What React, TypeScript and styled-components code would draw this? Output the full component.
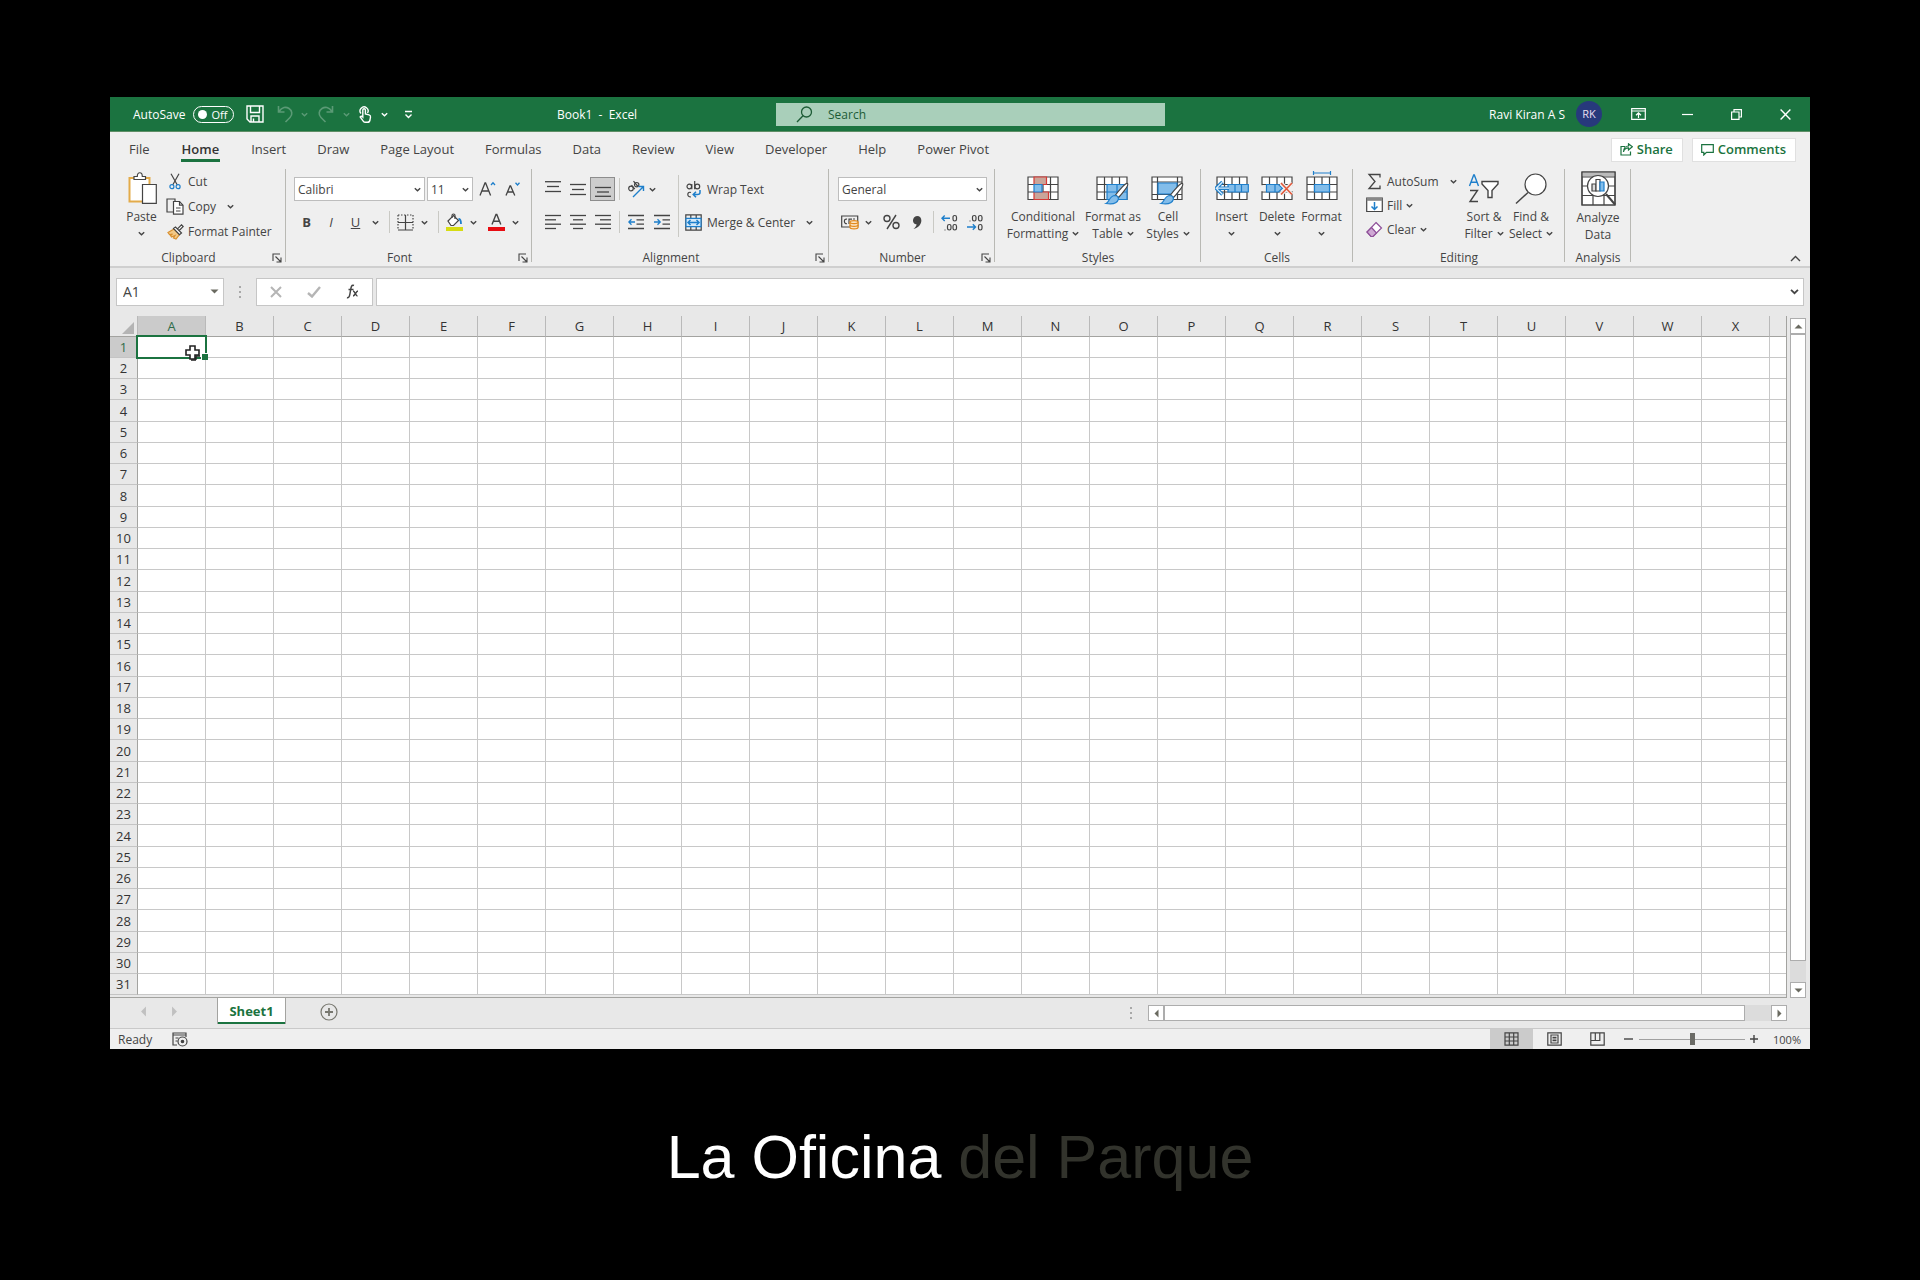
import React from 'react';
import styled, { createGlobalStyle, css } from 'styled-components';

const GREEN = '#1b7340';
const INK = '#444444';
const BLUE = '#1e7fcb';
const SKY = '#83bdea';
const LINE = '#c8c8c8';

const GlobalStyle = createGlobalStyle`
  * { box-sizing: border-box; }
  body { margin: 0; background: #000; }
  button, input, select { font: inherit; color: inherit; margin: 0; padding: 0; border: 0; background: none; }
  svg { display: block; flex: none; }
`;

const Page = styled.div`
  min-height: 100vh;
  padding: 97px 110px 0;
  background: #000;
  font-family: 'Open Sans', 'Noto Sans', sans-serif;
  font-size: 12px;
  line-height: 17px;
  color: ${INK};
`;

const Window = styled.main`
  display: flex;
  flex-direction: column;
  background: #efefef;
`;

/* ---------- Title bar ---------- */

const TitleBar = styled.header`
  display: grid;
  grid-template-columns: 447fr 219fr 389fr 645fr;
  align-items: center;
  height: 35px;
  background: ${GREEN};
  border-bottom: 1px solid #5f8f66;
  color: #fff;
`;

const QuickAccess = styled.div`
  display: flex;
  align-items: center;
  padding-left: 23px;
`;

const AutoSave = styled.label`
  display: flex;
  align-items: center;
  gap: 8px;
  margin-right: 5px;
`;

const Toggle = styled.span`
  display: flex;
  align-items: center;
  justify-content: space-between;
  width: 41px;
  height: 17px;
  padding: 0 6px 0 4px;
  border: 1px solid #fff;
  border-radius: 9px;
  font-size: 11px;
`;

const Knob = styled.input`
  appearance: none;
  width: 9px;
  height: 9px;
  border-radius: 50%;
  background: #fff !important;
`;

const IconButton = styled.button<{ $w: number; $dim?: boolean }>`
  display: flex;
  align-items: center;
  justify-content: center;
  width: ${p => p.$w}px;
  height: 24px;
  flex: none;
  opacity: ${p => (p.$dim ? 0.28 : 1)};
`;

const DocTitle = styled.h1`
  margin: 0;
  font-size: 12px;
  font-weight: 400;
  white-space: pre;
`;

const SearchBox = styled.div`
  display: flex;
  align-items: center;
  gap: 15px;
  height: 23px;
  padding-left: 20px;
  background: #a9cfba;
  color: #1d5c36;

  input { flex: 1; min-width: 0; height: 23px; outline: none; }
  input::placeholder { color: #1d5c36; opacity: 1; }
`;

const Account = styled.div`
  display: flex;
  align-items: center;
  justify-content: flex-end;
`;

const Avatar = styled.span`
  width: 26px;
  height: 26px;
  margin: 0 11px;
  border-radius: 50%;
  background: #27397c;
  color: #e9dff0;
  font-size: 11px;
  line-height: 26px;
  text-align: center;
`;

/* ---------- Ribbon tabs ---------- */

const TabRow = styled.nav`
  display: flex;
  align-items: center;
  gap: 1px;
  height: 37px;
  padding: 0 14px 2px 4px;
`;

const RibbonTab = styled.button<{ $active?: boolean }>`
  position: relative;
  height: 35px;
  padding: 0 15px;
  font-size: 13px;
  ${p => p.$active && css`
    padding: 0 16px;
    font-weight: 600;
    color: #333;
    &::after {
      content: '';
      position: absolute;
      left: 15px;
      right: 15px;
      bottom: 5px;
      height: 3px;
      background: ${GREEN};
    }
  `}
`;

const Push = styled.span`
  flex: 1;
`;

const ShareButton = styled.button`
  display: flex;
  align-items: center;
  gap: 4px;
  height: 24px;
  margin-left: 8px;
  padding: 0 9px 0 8px;
  border: 1px solid #e0e0e0;
  background: #fff;
  color: ${GREEN};
  font-size: 13px;
  font-weight: 600;
`;

/* ---------- Ribbon ---------- */

const Ribbon = styled.div`
  display: flex;
  height: 99px;
  border-bottom: 2px solid #cfcfcf;
`;

const Group = styled.section<{ $w: number }>`
  position: relative;
  display: flex;
  flex-direction: column;
  width: ${p => p.$w}px;
  height: 97px;
  flex: none;

  &::after {
    content: '';
    position: absolute;
    top: 0;
    right: 0;
    width: 1px;
    height: 93px;
    background: #b9b9b4;
  }
`;

const GroupBody = styled.div<{ $pad?: number }>`
  display: flex;
  flex: 1;
  padding-left: ${p => p.$pad ?? 8}px;
`;

const GroupFoot = styled.footer`
  display: flex;
  align-items: center;
  height: 17px;
`;

const GroupName = styled.span`
  flex: 1;
  text-align: center;
`;

const Launcher = styled.button`
  width: 19px;
  padding-left: 5px;
`;

const Rows = styled.div`
  display: flex;
  flex-direction: column;
  gap: 9px;
  padding-top: 8px;
`;

const ToolRow = styled.div`
  display: flex;
  align-items: center;
  height: 24px;
`;

const Tool = styled.button<{ $w: number; $on?: boolean }>`
  display: flex;
  align-items: center;
  justify-content: center;
  width: ${p => p.$w}px;
  height: 24px;
  flex: none;
  font-size: 13px;
  ${p => p.$on && css`
    background: #cdcdcd;
    border: 1px solid #8d8d8d;
  `}
`;

const Divider = styled.span<{ $w: number; $tall?: boolean }>`
  display: flex;
  justify-content: center;
  align-self: ${p => (p.$tall ? 'flex-start' : 'center')};
  width: ${p => p.$w}px;
  height: ${p => (p.$tall ? 62 : 22)}px;
  margin-top: ${p => (p.$tall ? 6 : 0)}px;
  &::before {
    content: '';
    width: 1px;
    background: #c9c9c4;
  }
`;

const SelectBox = styled.div<{ $w: number }>`
  position: relative;
  width: ${p => p.$w}px;
  height: 24px;
  margin-right: 2px;
  border: 1px solid #bdbdbd;
  background: #fff;

  select {
    width: 100%;
    height: 22px;
    padding-left: 3px;
    appearance: none;
    outline: none;
  }
  svg {
    position: absolute;
    right: 3px;
    top: 8px;
    pointer-events: none;
  }
`;

const BigButton = styled.button<{ $w: number }>`
  display: flex;
  flex-direction: column;
  align-items: center;
  width: ${p => p.$w}px;
  height: 76px;
  padding-top: 2px;
  flex: none;
  white-space: nowrap;
`;

const BigLabel = styled.span`
  display: flex;
  align-items: center;
  gap: 4px;
  height: 17px;
  &:first-of-type { margin-top: 3px; }
`;

const SmallStack = styled.div<{ $w?: number; $pitch: number; $top?: number }>`
  display: flex;
  flex-direction: column;
  width: ${p => (p.$w ? `${p.$w}px` : 'auto')};
  padding: ${p => p.$top ?? 0}px 0 0 1px;
  button { height: ${p => p.$pitch}px; }
`;

const SmallButton = styled.button<{ $gap?: number }>`
  display: flex;
  align-items: center;
  gap: 4px;
  white-space: nowrap;
  > svg { margin-left: ${p => p.$gap ?? 0}px; }
`;

const Slot = styled.span<{ $w: number }>`
  display: flex;
  justify-content: center;
  width: ${p => p.$w}px;
`;

const Collapse = styled.button`
  align-self: flex-end;
  margin-left: auto;
  padding: 0 9px 4px;
`;

/* ---------- Formula bar ---------- */

const FormulaBar = styled.div`
  display: flex;
  align-items: center;
  height: 48px;
  padding: 0 6px 1px;
  background: #e8e8e8;
`;

const FieldBox = styled.div<{ $w?: number }>`
  display: flex;
  align-items: center;
  flex: ${p => (p.$w ? 'none' : 1)};
  width: ${p => (p.$w ? `${p.$w}px` : 'auto')};
  height: 28px;
  padding: 0 4px 0 6px;
  border: 1px solid #c6c6c6;
  background: #fff;
  font-size: 14px;
  input { flex: 1; min-width: 0; height: 26px; outline: none; }
`;

const FormulaTools = styled.div`
  display: flex;
  align-items: center;
  justify-content: space-around;
  width: 117px;
  height: 28px;
  margin-right: 3px;
  border: 1px solid #c6c6c6;
  background: #fff;
`;

const Grip = styled.span<{ $w: number }>`
  display: flex;
  justify-content: center;
  width: ${p => p.$w}px;
`;

/* ---------- Sheet ---------- */

const SheetArea = styled.div`
  display: flex;
  height: 682px;
  background: #e8e8e8;
`;

const GridClip = styled.div`
  flex: 1;
  overflow: hidden;
  border-right: 1px solid #a3a3a0;
  border-bottom: 1px solid #a3a3a0;
`;

const Sheet = styled.table`
  width: 100%;
  table-layout: fixed;
  border-collapse: separate;
  border-spacing: 0;
  color: #333;

  col:first-child { width: 28px; }
  col { width: 68px; }
  col:last-child { width: auto; }
  th, td { padding: 0; height: 21px; line-height: 18px; }
  tr:nth-child(4n) > * { height: 22px; }
  td { border-right: 1px solid ${LINE}; border-bottom: 1px solid ${LINE}; background: #fff; }
  td:last-child { border-right: 0; }
`;

const ColHead = styled.th<{ $on?: boolean }>`
  font-weight: 400;
  font-size: 13px;
  border-right: 1px solid #b9b9b9;
  border-bottom: 1px solid #a3a3a0;
  background: ${p => (p.$on ? '#cbcbcb' : '#e8e8e8')};
  color: ${p => (p.$on ? '#2f6b49' : '#333')};
  &:last-child { border-right: 0; }
`;

const RowHead = styled.th<{ $on?: boolean }>`
  font-weight: 400;
  font-size: 13px;
  border-right: 1px solid #a3a3a0;
  border-bottom: 1px solid #c4c4c4;
  background: ${p => (p.$on ? '#cbcbcb' : '#e8e8e8')};
  color: ${p => (p.$on ? '#2f6b49' : '#333')};
`;

const Corner = styled.th`
  border-right: 1px solid #b9b9b9;
  border-bottom: 1px solid #a3a3a0;
  background: #e8e8e8;
  svg { margin: 3px 3px 0 auto; }
`;

const ActiveCell = styled.td`
  position: relative;
`;

const Selection = styled.span`
  position: absolute;
  inset: -2px;
  border: 2px solid ${GREEN};
  &::after {
    content: '';
    position: absolute;
    right: -3px;
    bottom: -3px;
    width: 6px;
    height: 6px;
    border: solid #fff;
    border-width: 1px 0 0 1px;
    background: ${GREEN};
  }
`;

const Pointer = styled.span`
  position: absolute;
  left: 46px;
  top: 7px;
  z-index: 1;
`;

const ScrollColumn = styled.div`
  display: flex;
  flex-direction: column;
  width: 16px;
  margin: 2px 4px 0 3px;
  background: #dcdcdc;
`;

const ScrollButton = styled.button`
  display: flex;
  align-items: center;
  justify-content: center;
  width: 16px;
  height: 16px;
  flex: none;
  border: 1px solid #adadad;
  background: #fff;
`;

const ThumbV = styled.div`
  height: 627px;
  border: 1px solid #adadad;
  background: #fff;
`;

const SheetBar = styled.div`
  display: flex;
  height: 31px;
  border-bottom: 1px solid #c9c9c9;
  background: #e8e8e8;
`;

const SheetNav = styled.div`
  display: flex;
  align-items: center;
  gap: 20px;
  width: 107px;
  padding: 0 0 3px 28px;
`;

const SheetTab = styled.button`
  width: 69px;
  height: 26px;
  border: solid #a3a3a0;
  border-width: 0 1px 0;
  box-shadow: inset 0 -2px ${GREEN};
  background: #fff;
  color: ${GREEN};
  font-size: 13px;
  font-weight: 700;
`;

const AddSheet = styled.button`
  width: 18px;
  height: 28px;
  margin-left: 34px;
`;

const ScrollRow = styled.div`
  display: flex;
  width: 639px;
  height: 16px;
  margin: 7px 23px 0 9px;
  background: #dcdcdc;
`;

const ThumbH = styled.div`
  width: 581px;
  border: 1px solid #adadad;
  background: #fff;
`;

const BarGrip = styled.span`
  align-self: center;
  margin-right: 7px;
`;

const StatusBar = styled.footer`
  display: flex;
  align-items: center;
  height: 20px;
  padding: 0 9px 0 8px;
  background: #efefef;
`;

const StatusText = styled.span`
  margin-right: 20px;
`;

const ViewButton = styled.button<{ $on?: boolean }>`
  display: flex;
  align-items: center;
  justify-content: center;
  width: 43px;
  height: 20px;
  background: ${p => (p.$on ? '#cbcbcb' : 'none')};
`;

const Zoom = styled.div`
  display: flex;
  align-items: center;
  gap: 4px;
  margin: 0 14px 0 2px;
`;

const Slider = styled.input`
  appearance: none;
  width: 106px;
  height: 14px;
  background: linear-gradient(#a0a0a0, #a0a0a0) center / 100% 1px no-repeat !important;
  &::-webkit-slider-thumb {
    appearance: none;
    width: 5px;
    height: 12px;
    background: #6b6b66;
  }
`;

const ZoomValue = styled.span`
  font-size: 11px;
`;

const Caption = styled.p`
  margin: 72px 0 0;
  font: 61px/72px 'Liberation Sans', Arial, sans-serif;
  text-align: center;
  color: #fff;
`;

const Faded = styled.span`
  color: #32332c;
`;

/* ---------- Icons ---------- */

const Chevron = ({ c = INK, s = 7 }: { c?: string; s?: number }) => (
  <svg width={s} height={s} viewBox="0 0 7 7" fill="none" stroke={c} strokeWidth="1.4" aria-hidden="true"><path d="M.8 2.2 3.5 4.8 6.2 2.2" /></svg>
);

type IconProps = { w: number; h: number; sw?: number; c?: string; children: React.ReactNode };
const Icon = ({ w, h, sw = 1.2, c = INK, children }: IconProps) => (
  <svg width={w} height={h} viewBox={`0 0 ${w} ${h}`} fill="none" stroke={c} strokeWidth={sw} aria-hidden="true">{children}</svg>
);

const SaveIcon = () => (
  <Icon w={18} h={18} c="#fff" sw={1.4}><path d="M1 1h16v16H4l-3-3zM4.500 1v6.500h9V1M5 17v-6h8v6M7.500 13.500v3.500" /></Icon>
);
const UndoIcon = () => <Icon w={17} h={18} c="#fff" sw={1.6}><path d="M1.500 1v6h6M2 6.500C5 2 9 1.500 12 3.500s4 6 1 9L8.500 17" /></Icon>;
const RedoIcon = () => <Icon w={17} h={18} c="#fff" sw={1.6}><path d="M15.500 1v6h-6M15 6.500C12 2 8 1.500 5 3.500s-4 6-1 9L8.500 17" /></Icon>;
const TouchIcon = () => (
  <Icon w={14} h={18} c="#fff" sw={1.4}>
    <path d="M3 8.500A4 4 0 1 1 9.500 8" />
    <path d="M4.800 12V5a1.300 1.300 0 0 1 2.600 0v4l3.600.9c1 .3 1.600 1 1.500 2L12 15c-.3 1.500-1.200 2.300-2.500 2.300h-2c-1 0-1.700-.3-2.300-1.200L2.200 12c.7-1 1.700-.9 2.600 0z" />
  </Icon>
);
const CustomizeIcon = () => <Icon w={9} h={9} c="#fff" sw={1.4}><path d="M1 1.500h7M1.500 4.500l3 3 3-3" /></Icon>;
const SearchIcon = () => <Icon w={17} h={17} c="#1d5c36" sw={1.3}><circle cx="10.500" cy="6" r="5" /><path d="M7 9.700 1 16" /></Icon>;
const RibbonModeIcon = () => (
  <Icon w={15} h={12} c="#fff"><path d="M.7.700h13.600v10.600H.7zM.7 3h13.600M7.500 10V5M5 7.200l2.500-2.400L10 7.200" /></Icon>
);
const MinIcon = () => <Icon w={11} h={11} c="#fff"><path d="M0 5.500h11" /></Icon>;
const RestoreIcon = () => <Icon w={11} h={11} c="#fff"><path d="M.6 3h7.400v7.400H.6zM3 3V.6h7.400V8H8" /></Icon>;
const CloseIcon = () => <Icon w={11} h={11} c="#fff" sw={1.4}><path d="m.6.600 9.800 9.800M10.400.600.6 10.400" /></Icon>;
const ShareIcon = () => (
  <Icon w={13} h={13} c={GREEN}><path d="M5 3.500H1v8.500h9.500V8.500M3.500 9C4 6 6 4.800 8.500 4.800V7L12.300 3.700 8.500.8V3C5.500 3 3.500 5.500 3.500 9z" /></Icon>
);
const CommentIcon = () => <Icon w={13} h={12} c={GREEN}><path d="M.7.700h11.600v7.600H5.500L2.800 11V8.300H.7z" /></Icon>;

const PasteIcon = () => (
  <Icon w={30} h={34}>
    <path d="M2.500 7h20v23.500h-20z" fill="#fff" stroke="#e3ab4a" strokeWidth="2" />
    <path d="M7 8.500V5.500h3.300c0-5 5-5 5 0h3.200v3z" fill="#fff" />
    <path d="M15.500 13.500h13.800v18.800H15.500z" fill="#fff" />
  </Icon>
);
const CutIcon = () => (
  <Icon w={12} h={17}><path d="M2 .8 8.300 12M10 .8 3.700 12" /><circle cx="2.900" cy="13.700" r="2" stroke={BLUE} /><circle cx="9.100" cy="13.700" r="2" stroke={BLUE} /></Icon>
);
const CopyIcon = () => (
  <Icon w={18} h={17}><path d="M7 14H1V1h8v2" /><path d="M7.500 3.500h6l3.500 3.700v9H7.500z" fill="#fff" /><path d="M13.500 3.500v3.700H17M10 10h4.500M10 13h4.500" /></Icon>
);
const PainterIcon = () => (
  <Icon w={17} h={16}>
    <path d="M1 8.500 7 5l5.500 5.500L9 15 6.500 14 8 11.500 4.500 13 3.500 11.500 5.500 10 2.500 10.500z" fill="#f3c987" stroke="#d9902f" />
    <path d="m6.500 4.500 2-1.500 6 6-2 1.700zM10.500 4.800 14.500.8l1.700 1.700-4 4" fill="#fff" />
  </Icon>
);
const GrowIcon = () => <Icon w={17} h={16} sw={1.3}><path d="M1 14.500 6 2h.6l5 12.500M2.800 10h7" /><path d="m12 4 2-2.200L16 4" stroke={BLUE} /></Icon>;
const ShrinkIcon = () => <Icon w={16} h={16} sw={1.3}><path d="M1 14.500 5 5h.6l4.200 9.500M2.600 11h5.600" /><path d="m10.500 1.800 2 2.200 2-2.200" stroke={BLUE} /></Icon>;
const BorderIcon = () => (
  <Icon w={17} h={17}><path d="M1 1h15M1 1v15M16 1v15" strokeDasharray="1.500 1.500" /><path d="M8.500 1v15M1 8.500h15M1 16h15" /></Icon>
);
const FillIcon = () => (
  <Icon w={17} h={18}>
    <path d="m2 8 5.500-5.500 5 5L7.500 12.500H5z" fill="#fff" /><path d="M6 5V2.500a1.500 1.500 0 0 1 3 0V6" />
    <path d="M12.500 6c2 0 2.500 2 2.500 5" stroke={BLUE} strokeWidth="1.800" />
    <path d="M0 16h17" stroke="#d6dc12" strokeWidth="4" />
  </Icon>
);
const FontColorIcon = () => (
  <Icon w={17} h={18} sw={1.4}><path d="M4 11.500 8 1.500h.8l4 10M5.300 8.200h6.200" /><path d="M0 16h17" stroke="#e80c12" strokeWidth="4" /></Icon>
);

const LinesIcon = ({ lines }: { lines: Array<[number, number, number]> }) => (
  <Icon w={16} h={16} sw={1.3}>{lines.map(([y, a, b]) => <path key={y} d={`M${a} ${y}H${b}`} />)}</Icon>
);
const OrientIcon = () => (
  <Icon w={18} h={18}>
    <circle cx="4" cy="8.500" r="2.300" /><path d="m4.500 5.200 3.300 4M6.500 1.200 11 6.500" /><circle cx="9.700" cy="4.700" r="2.200" />
    <path d="M6 17 16 7M11.500 6.500h5V11" stroke={BLUE} strokeWidth="1.400" />
  </Icon>
);
const IndentIcon = ({ out }: { out?: boolean }) => (
  <Icon w={16} h={16} sw={1.3}>
    <path d="M0 1.500h16M8.500 5.800H16M8.500 10.200H16M0 14.500h16" />
    <path d={out ? 'M7 8H1M3.500 5.300.8 8l2.700 2.700' : 'M0 8h6M3.500 5.300 6.200 8l-2.700 2.700'} stroke={BLUE} />
  </Icon>
);
const WrapIcon = () => (
  <Icon w={15} h={17}>
    <circle cx="3.300" cy="5.500" r="2.300" /><path d="M5.800 3v5.300M8.700 0v8.300" /><circle cx="11.300" cy="5.500" r="2.400" />
    <path d="M5 11.500c-3.500-1.500-5 4.500 0 4.500" /><path d="M14 9v2.500c0 1.500-1 2-2.500 2H7.500M10 10.800l-2.800 2.700L10 16.300" stroke={BLUE} strokeWidth="1.500" />
  </Icon>
);
const MergeIcon = () => (
  <Icon w={17} h={17}>
    <path d="M.8.800h15.400v15.400H.8zM5.800.800v3.400M11.200.800v3.400M5.800 12.800v3.400M11.200 12.800v3.400" />
    <path d="M1 4.300h15v8.400H1z" fill="#d3e8f8" stroke={BLUE} /><path d="M3 8.500h11M5.500 6 3 8.500 5.500 11M11.500 6 14 8.500 11.500 11" stroke={BLUE} strokeWidth="1.500" />
  </Icon>
);
const CurrencyIcon = () => (
  <Icon w={18} h={15}>
    <path d="M.7 1h16v11H.7zM6 4.200c-3.500-1-3.500 5 0 4.500M8 9V4.200h3M14 4H12" />
    <path d="M9 7c0-1.800 8-1.800 8 0v5.500c0 1.800-8 1.800-8 0z" fill="#fbe3c3" stroke="#e28a1c" /><path d="M9 7.200c0 1.800 8 1.800 8 0M9 10c0 1.800 8 1.800 8 0" stroke="#e28a1c" />
  </Icon>
);
const PercentIcon = () => <Icon w={17} h={16} sw={1.4}><circle cx="4" cy="4.500" r="3" /><circle cx="13" cy="11.500" r="3" /><path d="M13 1 4 15" /></Icon>;
const CommaIcon = () => <Icon w={10} h={15} sw={0}><path d="M5 1c5 0 5.500 6 2.500 9.500C6 12.500 3.500 13.500 1.500 14c2-1.800 3-3 3-4.700C-.5 9.500 0 1 5 1z" fill={INK} /></Icon>;
const DecimalIcon = ({ less }: { less?: boolean }) => (
  <Icon w={17} h={17}>
    {less ? <><rect x="5.500" y="1.500" width="3.500" height="5.500" rx="1.700" /><rect x="11.500" y="1.500" width="3.500" height="5.500" rx="1.700" /><rect x="11.500" y="10.500" width="3.500" height="5.500" rx="1.700" /><path d="M2.500 7h1" /></>
      : <><rect x="12" y="1.500" width="3.500" height="5.500" rx="1.700" /><rect x="6.500" y="10.500" width="3.500" height="5.500" rx="1.700" /><rect x="12" y="10.500" width="3.500" height="5.500" rx="1.700" /><path d="M3.500 16h1" /></>}
    <path d={less ? 'M0 13h8.500M5.800 10.300 8.500 13l-2.700 2.700' : 'M9 4.200H1M3.700 1.500 1 4.200l2.700 2.700'} stroke={BLUE} strokeWidth="1.400" />
  </Icon>
);
const LaunchIcon = () => <Icon w={10} h={10} sw={1.1}><path d="M1 8V1h7M3.500 3.500l5 5M9 4.500V9H4.500" /></Icon>;

const BaseGrid = () => <path d="M1 6h30v22.500H1zM1 13.500h30M1 21h30M8.500 6v22.500M16 6v22.500M23.500 6v22.500" fill="#fff" />;
const Brush = () => (
  <>
    <path d="M31.500 12.500c2 1.500-6 11-9 14l-3-2.500c2.500-3.500 10-12.500 12-11.500z" fill="#fff" />
    <path d="M19 24.500c2.500.3 3.700 1.700 3.300 4-1.300 4-6.300 5-12.300 4 3.500-1.500 3.500-8 9-8z" fill={SKY} stroke={BLUE} />
  </>
);
const ConditionalIcon = () => (
  <Icon w={32} h={34}><BaseGrid /><path d="M7 6h12.500v7.500H7zM7 21h14.500v7.500H7z" fill="#c9a59a" stroke="#d63a36" /><path d="M7 13.500h8V21H7z" fill={SKY} stroke={BLUE} /></Icon>
);
const FormatTableIcon = () => <Icon w={34} h={34}><BaseGrid /><path d="M11 13.500h20v15H11z" fill={SKY} stroke={BLUE} /><path d="M11 21h20M21 13.500v15" stroke={BLUE} /><Brush /></Icon>;
const CellStylesIcon = () => (
  <Icon w={34} h={34}><path d="M1 6h30v22.500H1zM1 11h30M1 23.500h30M6.500 6v22.500M26.500 6v22.500" fill="#fff" /><path d="M7 12h19v11H7z" fill={SKY} stroke={BLUE} /><Brush /></Icon>
);
const InsertIcon = () => (
  <Icon w={34} h={34}>
    <g transform="translate(1 0)"><BaseGrid /></g>
    <path d="M13 13.500h20.300V21H13zM20 13.500V21M26.500 13.500V21" fill={SKY} stroke={BLUE} />
    <path d="M14 17.200H1.500M7.500 11l-6.300 6.200 6.300 6.300" stroke={BLUE} strokeWidth="3.600" /><path d="M14 17.200H1.500M7.500 11l-6.300 6.200 6.300 6.300" stroke="#d9edfb" strokeWidth="1.200" />
  </Icon>
);
const DeleteIcon = () => (
  <Icon w={32} h={34}>
    <BaseGrid /><path d="M0 14.200h32v6H0z" fill="#efefef" stroke="none" /><path d="M5.500 13.500h12l4 3.700-4 3.800h-12zM14 13.500V21" fill={SKY} stroke={BLUE} />
    <path d="m20 12 11 11.500M31 12 20 23.500" stroke="#efefef" strokeWidth="4" /><path d="m20 12 11 11.500M31 12 20 23.500" stroke="#e2583a" strokeWidth="1.600" />
  </Icon>
);
const FormatIcon = () => (
  <Icon w={32} h={34}><BaseGrid /><path d="M8.500 13.500h15V21h-15z" fill={SKY} stroke={BLUE} /><path d="M7.500 2h17M7.500 0v4M24.500 0v4" stroke={BLUE} /></Icon>
);
const SigmaIcon = () => <Icon w={17} h={17} sw={1.3}><path d="M14 4.500V1.500H3l6 7-6 7h11v-3" /></Icon>;
const FillDownIcon = () => <Icon w={17} h={16}><path d="M.7 1h15.600v13.500H.7z" fill="#fff" /><path d="M.7 2.300h15.600" strokeWidth="3" stroke="#888" /><path d="M8.500 5v7.500M5.500 9.500l3 3 3-3" stroke={BLUE} strokeWidth="1.500" /></Icon>;
const EraserIcon = () => (
  <Icon w={17} h={17} c="#8e4f98"><path d="M10 1.500 15.500 7 7 15.500H5L1 11z" fill="#fff" /><path d="M5.500 6.500 10.500 12 7 15.500H5L1 11z" fill="#cfa8d4" /></Icon>
);
const SortIcon = () => (
  <Icon w={32} h={34} sw={1.4}>
    <path d="m1.500 15 4.200-11h.6L10.500 15M3 11.300h6" stroke={BLUE} /><path d="M2 19.500h7.500L2 30.500h8" />
    <path d="M14 10.500h16v2.500l-6 6.500v7h-4v-7l-6-6.500z" fill="#fff" />
  </Icon>
);
const FindIcon = () => <Icon w={32} h={34}><circle cx="20.500" cy="13.500" r="10.500" fill="#fff" /><path d="M13 21.500 1 32.500" strokeWidth="1.500" /></Icon>;
const AnalyzeIcon = () => (
  <Icon w={35} h={35}>
    <path d="M1 1h33v33H1z" fill="#fff" /><path d="M1 3.500h33" strokeWidth="4" stroke="#bbb" /><path d="M1 1h33v33H1zM1 6h33M1 15h33M1 24.500h33M12 24v10M23 24v10" />
    <circle cx="17" cy="15" r="10.500" fill="#fff" /><path d="m25 23 9 10.500" strokeWidth="2" />
    <path d="M11 13h4v7h-4z" fill="#ddd" /><path d="M15 8.500h4V20h-4z" fill="#fff" /><path d="M19 11h4v9h-4z" fill={SKY} stroke={BLUE} />
  </Icon>
);
const FunctionIcon = () => (
  <Icon w={13} h={15} sw={1.5}><path d="M8 1.500C5.500.5 5 3 4.500 6.500S3.500 14.500 1 13.500M2.500 5.500h5M7 7c2 0 2.500 5 4.500 5M12 7c-2 0-3 5-5 5" /></Icon>
);
const MacroIcon = () => (
  <Icon w={16} h={15}><path d="M5 13H1V1h13v4M1 3h13M3.500 6h3M3.500 9h2" /><circle cx="10.500" cy="9.500" r="4.500" /><circle cx="10.500" cy="9.500" r="1.200" fill={INK} /></Icon>
);
const Triangle = ({ d, c = '#6a6a60', s = 9 }: { d: string; c?: string; s?: number }) => <svg width={s} height={s} viewBox="0 0 9 9" aria-hidden="true"><path d={d} fill={c} /></svg>;
const UP = 'M.5 6.500h8L4.500 2.500z';
const DOWN = 'M.5 2.500h8L4.500 6.500z';
const LEFT = 'M6.500.5v8L2.500 4.500z';
const RIGHT = 'M2.500.5v8L6.500 4.500z';
const Dots = () => <svg width="2" height="12" viewBox="0 0 2 12" fill="#a8a8a8" aria-hidden="true"><path d="M0 0h2v2H0zM0 5h2v2H0zM0 10h2v2H0z" /></svg>;
const CrossPointer = () => (
  <svg width="18" height="18" viewBox="0 0 18 18" aria-hidden="true"><path d="M6 2h5v4h4v5h-4v4H6v-4H2V6h4z" fill="#fff" stroke="#222" strokeWidth="1.600" /><path d="M12 16H7M16 12h-4v4" stroke="#222" strokeWidth="1.300" fill="none" /></svg>
);

/* ---------- Parts ---------- */

const tabs = ['File', 'Home', 'Insert', 'Draw', 'Page Layout', 'Formulas', 'Data', 'Review', 'View', 'Developer', 'Help', 'Power Pivot'];
const columns = 'ABCDEFGHIJKLMNOPQRSTUVWX'.split('');
const rows = Array.from({ length: 31 }, (_, i) => i + 1);

function RibbonGroup({ name, w, pad, launch, children }: { name: string; w: number; pad?: number; launch?: boolean; children: React.ReactNode }) {
  return (
    <Group $w={w} aria-label={name}>
      <GroupBody $pad={pad}>{children}</GroupBody>
      <GroupFoot>
        <GroupName>{name}</GroupName>
        {launch && <Launcher aria-label={`${name} settings`}><LaunchIcon /></Launcher>}
      </GroupFoot>
    </Group>
  );
}

function Big({ w, icon, lines, menu }: { w: number; icon: React.ReactNode; lines: string[]; menu?: boolean }) {
  return (
    <BigButton $w={w}>
      {icon}
      <BigLabel>{lines[0]}</BigLabel>
      <BigLabel>{lines[1]}{menu && <Chevron />}</BigLabel>
    </BigButton>
  );
}

function Small({ icon, slot = 18, gap, menu, children }: { icon: React.ReactNode; slot?: number; gap?: number; menu?: boolean; children: React.ReactNode }) {
  return <SmallButton $gap={gap}><Slot $w={slot}>{icon}</Slot>{children}{menu && <Chevron />}</SmallButton>;
}

const Menu = ({ w, label }: { w: number; label: string }) => <Tool $w={w} aria-label={label}><Chevron /></Tool>;

function Combo({ w, label, value }: { w: number; label: string; value: string }) {
  return <SelectBox $w={w}><select aria-label={label}><option>{value}</option></select><Chevron /></SelectBox>;
}

export default function App() {
  return (
    <Page>
      <GlobalStyle />
      <Window>
        <TitleBar>
          <QuickAccess>
            <AutoSave>AutoSave<Toggle><Knob type="checkbox" role="switch" />Off</Toggle></AutoSave>
            <IconButton $w={32} aria-label="Save"><SaveIcon /></IconButton>
            <IconButton $w={29} $dim aria-label="Undo"><UndoIcon /></IconButton>
            <IconButton $w={8} $dim aria-label="Undo list"><Chevron c="#fff" /></IconButton>
            <IconButton $w={34} $dim aria-label="Redo"><RedoIcon /></IconButton>
            <IconButton $w={8} $dim aria-label="Redo list"><Chevron c="#fff" /></IconButton>
            <IconButton $w={30} aria-label="Touch mode"><TouchIcon /></IconButton>
            <IconButton $w={8} aria-label="Touch mode list"><Chevron c="#fff" /></IconButton>
            <IconButton $w={40} aria-label="Customize toolbar"><CustomizeIcon /></IconButton>
          </QuickAccess>
          <DocTitle>Book1  -  Excel</DocTitle>
          <SearchBox><SearchIcon /><input type="text" aria-label="Search" placeholder="Search" /></SearchBox>
          <Account>
            <span>Ravi Kiran A S</span>
            <Avatar>RK</Avatar>
            <IconButton $w={50} aria-label="Ribbon display"><RibbonModeIcon /></IconButton>
            <IconButton $w={49} aria-label="Minimize"><MinIcon /></IconButton>
            <IconButton $w={49} aria-label="Restore"><RestoreIcon /></IconButton>
            <IconButton $w={49} aria-label="Close"><CloseIcon /></IconButton>
          </Account>
        </TitleBar>

        <TabRow>
          {tabs.map(t => <RibbonTab key={t} $active={t === 'Home'}>{t}</RibbonTab>)}
          <Push />
          <ShareButton><ShareIcon />Share</ShareButton>
          <ShareButton><CommentIcon />Comments</ShareButton>
        </TabRow>

        <Ribbon>
          <RibbonGroup name="Clipboard" w={176} launch>
            <Big w={47} icon={<PasteIcon />} lines={['Paste', '']} menu />
            <SmallStack $pitch={25}>
              <Small icon={<CutIcon />}>Cut</Small>
              <Small icon={<CopyIcon />} gap={7} menu>Copy</Small>
              <Small icon={<PainterIcon />}>Format Painter</Small>
            </SmallStack>
          </RibbonGroup>

          <RibbonGroup name="Font" w={246} launch>
            <Rows>
              <ToolRow>
                <Combo w={131} label="Font name" value="Calibri" />
                <Combo w={46} label="Font size" value="11" />
                <Tool $w={24} aria-label="Grow font"><GrowIcon /></Tool>
                <Tool $w={28} aria-label="Shrink font"><ShrinkIcon /></Tool>
              </ToolRow>
              <ToolRow>
                <Tool $w={25}><b>B</b></Tool>
                <Tool $w={24}><i>I</i></Tool>
                <Tool $w={25}><u>U</u></Tool>
                <Menu w={14} label="Underline styles" />
                <Divider $w={14} />
                <Tool $w={19} aria-label="Borders"><BorderIcon /></Tool>
                <Menu w={18} label="Border styles" />
                <Divider $w={10} />
                <Tool $w={23} aria-label="Fill color"><FillIcon /></Tool>
                <Menu w={14} label="Fill colors" />
                <Tool $w={32} aria-label="Font color"><FontColorIcon /></Tool>
                <Menu w={7} label="Font colors" />
              </ToolRow>
            </Rows>
          </RibbonGroup>

          <RibbonGroup name="Alignment" w={297} launch>
            <Rows>
              <ToolRow>
                <Tool $w={25} aria-label="Top align"><LinesIcon lines={[[0.7, 0, 16], [5.5, 2, 14], [10.5, 0, 16]]} /></Tool>
                <Tool $w={25} aria-label="Middle align"><LinesIcon lines={[[3.5, 0, 16], [8.5, 2, 14], [13.5, 0, 16]]} /></Tool>
                <Tool $w={25} $on aria-label="Bottom align"><LinesIcon lines={[[6.5, 0, 16], [11, 2, 14], [15.3, 0, 16]]} /></Tool>
                <Divider $w={8} />
                <Tool $w={26} aria-label="Orientation"><OrientIcon /></Tool>
                <Menu w={7} label="Orientation list" />
              </ToolRow>
              <ToolRow>
                <Tool $w={25} aria-label="Align left"><LinesIcon lines={[[1.5, 0, 16], [5.8, 0, 11], [10.2, 0, 16], [14.5, 0, 11]]} /></Tool>
                <Tool $w={25} aria-label="Center"><LinesIcon lines={[[1.5, 0, 16], [5.8, 3, 13], [10.2, 0, 16], [14.5, 3, 13]]} /></Tool>
                <Tool $w={25} aria-label="Align right"><LinesIcon lines={[[1.5, 0, 16], [5.8, 5, 16], [10.2, 0, 16], [14.5, 5, 16]]} /></Tool>
                <Divider $w={8} />
                <Tool $w={26} aria-label="Decrease indent"><IndentIcon out /></Tool>
                <Tool $w={25} aria-label="Increase indent"><IndentIcon /></Tool>
              </ToolRow>
            </Rows>
            <Divider $w={8} $tall />
            <SmallStack $pitch={33} $top={4}>
              <Small icon={<WrapIcon />} slot={20}>Wrap Text</Small>
              <Small icon={<MergeIcon />} slot={20} gap={7} menu>Merge &amp; Center</Small>
            </SmallStack>
          </RibbonGroup>

          <RibbonGroup name="Number" w={166} pad={9} launch>
            <Rows>
              <ToolRow>
                <Combo w={149} label="Number format" value="General" />
              </ToolRow>
              <ToolRow>
                <Tool $w={23} aria-label="Accounting format"><CurrencyIcon /></Tool>
                <Menu w={14} label="Currencies" />
                <Tool $w={33} aria-label="Percent"><PercentIcon /></Tool>
                <Tool $w={17} aria-label="Comma style"><CommaIcon /></Tool>
                <Divider $w={16} />
                <Tool $w={17} aria-label="Increase decimal"><DecimalIcon /></Tool>
                <Tool $w={34} aria-label="Decrease decimal"><DecimalIcon less /></Tool>
              </ToolRow>
            </Rows>
          </RibbonGroup>

          <RibbonGroup name="Styles" w={206}>
            <Big w={80} icon={<ConditionalIcon />} lines={['Conditional', 'Formatting']} menu />
            <Big w={60} icon={<FormatTableIcon />} lines={['Format as', 'Table']} menu />
            <Big w={50} icon={<CellStylesIcon />} lines={['Cell', 'Styles']} menu />
          </RibbonGroup>

          <RibbonGroup name="Cells" w={152}>
            <Big w={45} icon={<InsertIcon />} lines={['Insert', '']} menu />
            <Big w={46} icon={<DeleteIcon />} lines={['Delete', '']} menu />
            <Big w={43} icon={<FormatIcon />} lines={['Format', '']} menu />
          </RibbonGroup>

          <RibbonGroup name="Editing" w={212} pad={11}>
            <SmallStack $w={96} $pitch={24}>
              <Small icon={<SigmaIcon />} gap={7} menu>AutoSum</Small>
              <Small icon={<FillDownIcon />} menu>Fill</Small>
              <Small icon={<EraserIcon />} menu>Clear</Small>
            </SmallStack>
            <Big w={48} icon={<SortIcon />} lines={['Sort &', 'Filter']} menu />
            <Big w={46} icon={<FindIcon />} lines={['Find &', 'Select']} menu />
          </RibbonGroup>

          <RibbonGroup name="Analysis" w={66} pad={1}>
            <Big w={64} icon={<AnalyzeIcon />} lines={['Analyze', 'Data']} />
          </RibbonGroup>
          <Collapse aria-label="Collapse ribbon"><Icon w={11} h={7} sw={1.4}><path d="m1 6 4.500-4.500L10 6" /></Icon></Collapse>
        </Ribbon>

        <FormulaBar>
          <FieldBox $w={108}><input type="text" aria-label="Name box" defaultValue="A1" /><Triangle d={DOWN} /></FieldBox>
          <Grip $w={32}><Dots /></Grip>
          <FormulaTools>
            <button aria-label="Cancel"><Icon w={12} h={12} c="#b5b5b5" sw={2}><path d="m1 1 10 10M11 1 1 11" /></Icon></button>
            <button aria-label="Enter"><Icon w={14} h={12} c="#b5b5b5" sw={2.4}><path d="m1 7 4 3.500L13 1" /></Icon></button>
            <button aria-label="Insert function"><FunctionIcon /></button>
          </FormulaTools>
          <FieldBox><input type="text" aria-label="Formula" /><Chevron s={9} /></FieldBox>
        </FormulaBar>

        <SheetArea>
          <GridClip>
            <Sheet>
              <colgroup><col />{columns.map(c => <col key={c} />)}<col /></colgroup>
              <thead>
                <tr>
                  <Corner><svg width="12" height="12" viewBox="0 0 12 12" aria-hidden="true"><path d="M12 0v12H0z" fill="#b4b4b4" /></svg></Corner>
                  {columns.map(c => <ColHead key={c} $on={c === 'A'}>{c}</ColHead>)}
                  <ColHead />
                </tr>
              </thead>
              <tbody>
                {rows.map(r => (
                  <tr key={r}>
                    <RowHead $on={r === 1}>{r}</RowHead>
                    {columns.map(c => r === 1 && c === 'A'
                      ? <ActiveCell key={c}><Selection /><Pointer><CrossPointer /></Pointer></ActiveCell>
                      : <td key={c} />)}
                    <td />
                  </tr>
                ))}
              </tbody>
            </Sheet>
          </GridClip>
          <ScrollColumn>
            <ScrollButton aria-label="Scroll up"><Triangle d={UP} /></ScrollButton>
            <ThumbV />
            <Push />
            <ScrollButton aria-label="Scroll down"><Triangle d={DOWN} /></ScrollButton>
          </ScrollColumn>
        </SheetArea>

        <SheetBar>
          <SheetNav><Triangle d={LEFT} c="#c0c0c0" s={11} /><Triangle d={RIGHT} c="#c0c0c0" s={11} /></SheetNav>
          <SheetTab>Sheet1</SheetTab>
          <AddSheet aria-label="New sheet"><Icon w={18} h={18} c="#77776f"><circle cx="9" cy="9" r="8" /><path d="M9 5v8M5 9h8" strokeWidth="1.800" /></Icon></AddSheet>
          <Push />
          <BarGrip><Dots /></BarGrip>
          <ScrollRow>
            <ScrollButton aria-label="Scroll left"><Triangle d={LEFT} /></ScrollButton>
            <ThumbH />
            <Push />
            <ScrollButton aria-label="Scroll right"><Triangle d={RIGHT} /></ScrollButton>
          </ScrollRow>
        </SheetBar>

        <StatusBar>
          <StatusText>Ready</StatusText>
          <MacroIcon />
          <Push />
          <ViewButton $on aria-label="Normal view"><Icon w={15} h={14}><path d="M1 .8h13v12.400H1zM1 5h13M1 9h13M5.300 1v12M9.700 1v12" /></Icon></ViewButton>
          <ViewButton aria-label="Page layout view"><Icon w={15} h={14}><path d="M.8.800h13.400v12.400H.8zM4 3h7v8H4zM5.500 5.300h4M5.500 7h4M5.500 8.700h4" /></Icon></ViewButton>
          <ViewButton aria-label="Page break view"><Icon w={15} h={14}><path d="M.8.800h13.400v12.400H.8zM.8 8.500h9V1M5.300 1v7" /></Icon></ViewButton>
          <Zoom>
            <button aria-label="Zoom out"><Icon w={14} h={10} sw={1.4}><path d="M3 5h9" /></Icon></button>
            <Slider aria-label="Zoom level" type="range" min={0} max={200} defaultValue={101} />
            <button aria-label="Zoom in"><Icon w={10} h={10} sw={1.4}><path d="M1 5h8M5 1v8" /></Icon></button>
          </Zoom>
          <ZoomValue>100%</ZoomValue>
        </StatusBar>
      </Window>
      <Caption>La Oficina <Faded>del Parque</Faded></Caption>
    </Page>
  );
}
